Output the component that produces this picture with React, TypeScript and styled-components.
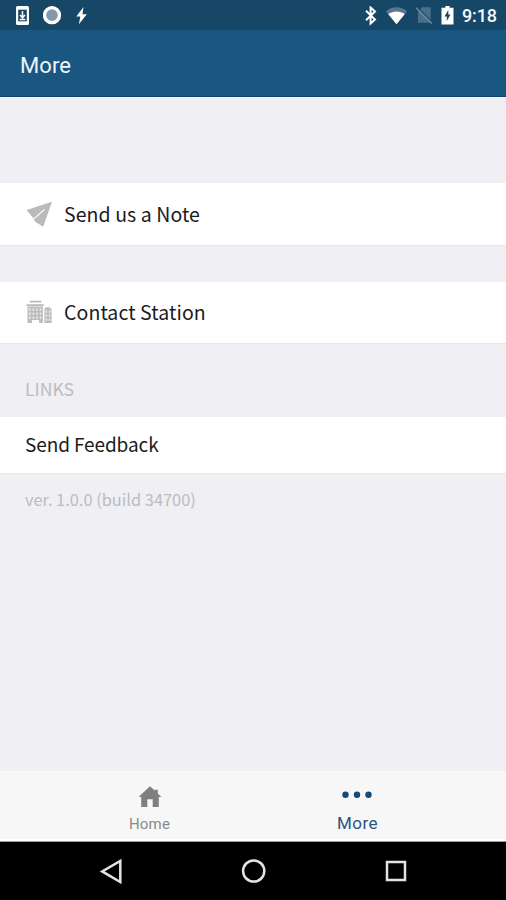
import React from 'react';
import styled, { createGlobalStyle } from 'styled-components';

const GlobalStyle = createGlobalStyle`
  * { box-sizing: border-box; }
  body { margin: 0; background: #efeff4; }
`;

const Screen = styled.div`
  width: 506px;
  height: 900px;
  display: flex;
  flex-direction: column;
  overflow: hidden;
  background: #efeff4;
  font-family: 'Noto Sans CJK SC', 'Noto Sans', sans-serif;
`;

const StatusBar = styled.header`
  height: 30px;
  flex: none;
  display: flex;
  justify-content: space-between;
  align-items: center;
  padding: 1px 9px 0 15px;
  background: #174767;
  svg { display: block; }
`;

const StatusGroup = styled.div<{ $gap: number }>`
  display: flex;
  align-items: center;
  gap: ${(p) => p.$gap}px;
`;

const Clock = styled.span`
  font: 500 18px/22px Roboto, sans-serif;
  letter-spacing: -0.1px;
  color: #f4f8fb;
`;

const TitleBar = styled.div`
  height: 67px;
  flex: none;
  display: flex;
  align-items: center;
  padding: 5px 20px 0;
  background: #1a5780;
  border-bottom: 1px solid #12436a;
`;

const Title = styled.h1`
  margin: 0;
  font: 400 22px/28px Roboto, sans-serif;
  letter-spacing: 0.1px;
  color: #eef5fa;
`;

const Content = styled.main`
  flex: 1;
  display: flex;
  flex-direction: column;
  padding-top: 86px;
`;

const Row = styled.div<{ $height: number; $after?: number }>`
  height: ${(p) => p.$height}px;
  flex: none;
  display: flex;
  align-items: center;
  gap: 12px;
  padding: 0 26px;
  margin-bottom: ${(p) => p.$after ?? 0}px;
  background: #fff;
  border-bottom: 1px solid #e9e9ec;
`;

const RowLabel = styled.span<{ $compact?: boolean }>`
  font-size: ${(p) => (p.$compact ? 19 : 19.5)}px;
  line-height: 28px;
  letter-spacing: ${(p) => (p.$compact ? -0.1 : 0.08)}px;
  padding-bottom: ${(p) => (p.$compact ? 2 : 1)}px;
  margin-left: ${(p) => (p.$compact ? -1 : 0)}px;
  color: #1c1c1c;
  white-space: nowrap;
`;

const SectionLabel = styled.h2`
  height: 73px;
  margin: 0;
  padding: 31px 25px 0;
  font-size: 17.6px;
  line-height: 28px;
  font-weight: 400;
  color: #bcbcbf;
`;

const Version = styled.p`
  margin: 0;
  padding: 11px 25px 0;
  font-size: 16.4px;
  line-height: 28px;
  color: #bcbcbf;
`;

const TabBar = styled.nav`
  height: 71px;
  flex: none;
  display: flex;
  justify-content: center;
  background: #f7f7f7;
  border-bottom: 1px solid #a0a0a0;
  box-shadow: inset 0 -2px #fff;
`;

const Tab = styled.div<{ $active?: boolean }>`
  width: 208px;
  display: flex;
  flex-direction: column;
  align-items: center;
  padding-top: 11px;
  color: ${(p) => (p.$active ? '#2b557c' : '#8b8b8b')};
  font: 400 ${(p) => (p.$active ? 17 : 15)}px/20px Roboto, sans-serif;
  letter-spacing: ${(p) => (p.$active ? 0.4 : 0.2)}px;
  padding-left: 1px;
  svg { display: block; margin-bottom: ${(p) => (p.$active ? 5 : 6)}px; }
`;

const NavBar = styled.footer`
  height: 58px;
  flex: none;
  display: flex;
  justify-content: space-between;
  align-items: center;
  padding: 0 97px 0 98px;
  background: #000;
`;

const PhoneDownload = () => (
  <svg width="15" height="20" viewBox="0 0 15 20">
    <rect x="1" y="0" width="13" height="19" rx="1.5" fill="#fff" />
    <rect x="3.2" y="3.7" width="8.6" height="11.6" fill="#174767" />
    <path d="M7.5 5V11M5 9l2.5 2.8L10 9M4.7 13.5h5.6" stroke="#fff" strokeWidth="1.5" fill="none" />
  </svg>
);

const Record = () => (
  <svg width="19" height="20" viewBox="0 0 19 20">
    <circle cx="9" cy="9.2" r="7.5" fill="#829aa7" stroke="#fff" strokeWidth="3.3" />
  </svg>
);

const Bolt = () => (
  <svg width="12" height="18" viewBox="0 0 12 18">
    <path d="M8.5 0 1.3 9.5h4L3.9 17.3 11.8 7.2H7.5Z" fill="#fff" />
  </svg>
);

const Bluetooth = () => (
  <svg width="14" height="20" viewBox="0 0 14 20">
    <path d="M2 4.7 11 13.5 6.6 17.5V1.5L11 5.5 2 14.3" fill="none" stroke="#fff" strokeWidth="2" />
  </svg>
);

const Wifi = () => (
  <svg width="21" height="18" viewBox="0 0 21 18">
    <path d="M0 4.4C6-1 15-1 21 4.4L10.5 17.3Z" fill="#58788d" />
    <path d="M2.2 7c5-3.4 11.6-3.4 16.6 0L10.5 17.3Z" fill="#fff" />
  </svg>
);

const NoSim = () => (
  <svg width="18" height="19" viewBox="0 0 18 19">
    <path d="M7 1.2h8.7v15.6H3V5.2Z" fill="#47708c" />
    <path d="m2.2 1.2 16 16" stroke="#174767" strokeWidth="1.3" />
    <path d="m1 1.8 15.8 15.8" stroke="#718d9f" strokeWidth="1.4" />
  </svg>
);

const Battery = () => (
  <svg width="13" height="19" viewBox="0 0 13 19">
    <path d="M4.4 0h4.2v1.8h3.9v16.7H.5V1.8h3.9Z" fill="#fff" />
    <path d="M7.3 4 3.5 10.5h2.3V15L9.5 8.5H7.3Z" fill="#174767" />
  </svg>
);

const PaperPlane = () => (
  <svg width="26" height="26" viewBox="0 0 26 26">
    <path d="M.6 9 26 .8 17.2 25.8 9.2 20.8 7 16.8Z" fill="#bababa" />
    <path d="m6.6 18.9 11.9-10.4" stroke="#fff" strokeWidth="1.1" />
  </svg>
);

const Building = () => (
  <svg width="26" height="26" viewBox="0 0 26 26">
    <path d="M3.8 1.6h11.4M.5 5.1h17.2" stroke="#b9b9b9" strokeWidth="1.7" />
    <path d="M1.5 6.5h15.4v16.5h-3.8V20H6v3H1.5Z M18.4 9l1.4-1.8h3.6L25.6 9v14h-7.2Z" fill="#bdbdbd" />
    <path d="M3.8 8.5v11M7.4 8.5v11M11 8.5v11M14.6 8.5v11M20.4 10.5v11M23.6 10.5v11" stroke="#ececec" strokeWidth="1.6" strokeDasharray="2.2 1.8" />
  </svg>
);

const House = () => (
  <svg width="24" height="26" viewBox="0 0 24 26">
    <path d="M12 4.2 17 8.8V7.8h2.8v3.6l3.6 3.7h-2.6v10H14.7v-7.8H9.3v7.8H3.2v-10H.6Z" fill="#7f7f7f" />
  </svg>
);

const Dots = () => (
  <svg width="32" height="26" viewBox="0 0 32 26">
    <g fill="#134a7c">
      <circle cx="3.5" cy="12.7" r="3.2" />
      <circle cx="15" cy="12.7" r="3.2" />
      <circle cx="26.5" cy="12.7" r="3.2" />
    </g>
  </svg>
);

const NavIcon = styled.svg.attrs({ width: 26, height: 26, viewBox: '0 0 26 26' })`
  fill: none;
  stroke: #e3e3e3;
  stroke-width: 2.5;
`;

export default function App() {
  return (
    <>
      <GlobalStyle />
      <Screen>
        <StatusBar>
          <StatusGroup $gap={13}>
            <PhoneDownload />
            <Record />
            <Bolt />
          </StatusGroup>
          <StatusGroup $gap={8}>
            <Bluetooth />
            <Wifi />
            <NoSim />
            <Battery />
            <Clock>9:18</Clock>
          </StatusGroup>
        </StatusBar>
        <TitleBar>
          <Title>More</Title>
        </TitleBar>
        <Content>
          <Row $height={63} $after={36}>
            <PaperPlane />
            <RowLabel>Send us a Note</RowLabel>
          </Row>
          <Row $height={62}>
            <Building />
            <RowLabel>Contact Station</RowLabel>
          </Row>
          <SectionLabel>LINKS</SectionLabel>
          <Row $height={57}>
            <RowLabel $compact>Send Feedback</RowLabel>
          </Row>
          <Version>ver. 1.0.0 (build 34700)</Version>
        </Content>
        <TabBar>
          <Tab>
            <House />
            Home
          </Tab>
          <Tab $active>
            <Dots />
            More
          </Tab>
        </TabBar>
        <NavBar>
          <NavIcon><path d="M22.3 3v21L4.2 13.4Z" /></NavIcon>
          <NavIcon><circle cx="12.7" cy="13" r="10.6" /></NavIcon>
          <NavIcon><path d="M4 4h18v18H4Z" /></NavIcon>
        </NavBar>
      </Screen>
    </>
  );
}
